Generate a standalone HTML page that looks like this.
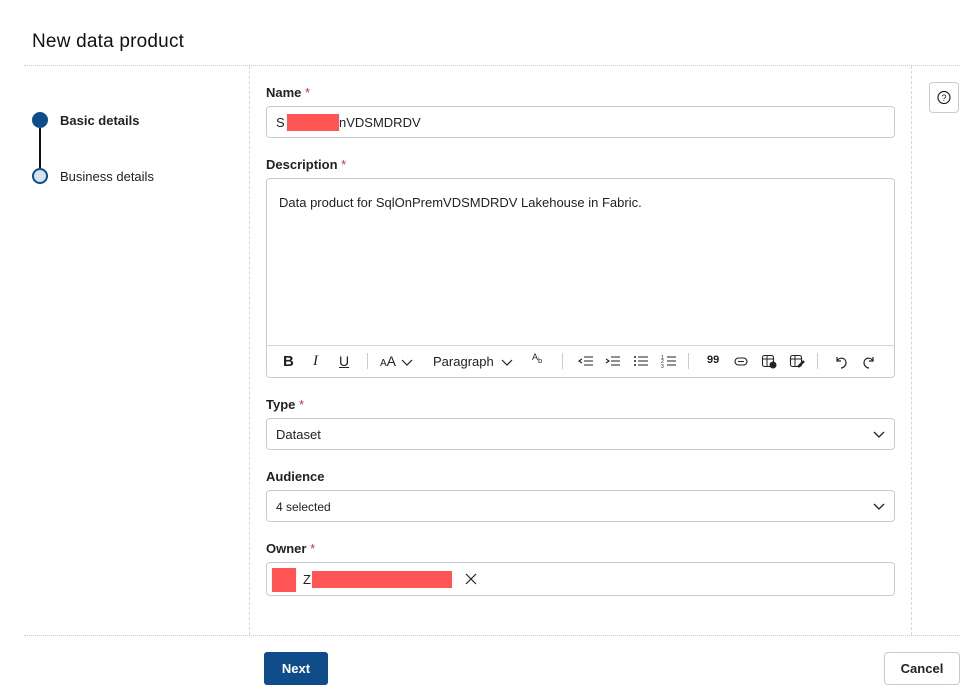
<!DOCTYPE html>
<html><head><style>
body{margin:0;width:960px;height:700px;background:#fff;font-family:"Liberation Sans",sans-serif;color:#222;position:relative;overflow:hidden;font-size:13px}
.a{position:absolute}
.lbl{position:absolute;left:266px;font-weight:bold;font-size:13px;color:#222}
.lbl span{color:#c4314b;font-weight:normal}
.box{position:absolute;left:266px;width:629px;border:1px solid #c8ccd1;border-radius:4px;background:#fff;box-sizing:border-box}
.red{position:absolute;background:#ff5555}
.chev{position:absolute;right:8px;top:9px}
.tb{position:absolute;font-size:13px;color:#222}
.ic{position:absolute;top:174px}
</style></head><body>
<div class="a" style="left:32px;top:31px;font-size:19px;color:#111;letter-spacing:0.2px">New data product</div>
<div class="a" style="left:24px;top:65px;width:936px;border-top:1px dotted #c5d0da"></div>
<div class="a" style="left:249px;top:66px;height:569px;border-left:1px dashed #cfd8e0"></div>
<div class="a" style="left:911px;top:66px;height:569px;border-left:1px dashed #cfd8e0"></div>
<div class="a" style="left:24px;top:635px;width:936px;border-top:1px dotted #c5d0da"></div>

<div class="a" style="left:32px;top:112px;width:16px;height:16px;border-radius:50%;background:#0f4c8a"></div>
<div class="a" style="left:39px;top:128px;width:2px;height:40px;background:#111"></div>
<div class="a" style="left:32px;top:168px;width:12px;height:12px;border-radius:50%;border:2px solid #0f4c8a;background:#d6e2ec"></div>
<div class="a" style="left:60px;top:113px;font-weight:bold">Basic details</div>
<div class="a" style="left:60px;top:169px">Business details</div>

<div class="a" style="left:929px;top:82px;width:30px;height:31px;box-sizing:border-box;border:1px solid #c8ccd1;border-radius:4px">
<svg width="28" height="29" viewBox="0 0 28 29"><circle cx="14" cy="14.5" r="6" fill="none" stroke="#222" stroke-width="1.2"/><text x="14" y="18" font-size="9" text-anchor="middle" font-family="Liberation Sans" fill="#222">?</text></svg></div>

<div class="lbl" style="top:85px">Name <span>*</span></div>
<div class="box" style="top:106px;height:32px"><div class="a" style="left:9px;top:8px">S</div><div class="red" style="left:20px;top:7px;width:52px;height:17px"></div><div class="a" style="left:72px;top:8px">nVDSMDRDV</div></div>

<div class="lbl" style="top:157px">Description <span>*</span></div>
<div class="box" style="top:178px;height:200px">
<div class="a" style="left:12px;top:16px">Data product for SqlOnPremVDSMDRDV Lakehouse in Fabric.</div>
<div class="a" style="left:0;right:0;top:166px;border-top:1px solid #d0d4d8"></div>
<div class="tb" style="left:16px;top:174px;font-weight:bold;font-size:15px">B</div>
<div class="tb" style="left:46px;top:174px;font-style:italic;font-size:15px;font-family:'Liberation Serif'">I</div>
<div class="tb" style="left:72px;top:174px;text-decoration:underline;font-size:14px">U</div>
<div class="a" style="left:100px;top:174px;height:16px;border-left:1px solid #ccc"></div>
<div class="tb" style="left:113px;top:174px;font-size:14px"><span style="font-size:10px">A</span>A</div>
<svg class="ic" style="left:134px;top:178px" width="12" height="10"><path d="M1 3l5 5 5-5" fill="none" stroke="#222" stroke-width="1.2"/></svg>
<div class="tb" style="left:166px;top:175px">Paragraph</div>
<svg class="ic" style="left:234px;top:178px" width="12" height="10"><path d="M1 3l5 5 5-5" fill="none" stroke="#222" stroke-width="1.2"/></svg>
<div class="tb" style="left:265px;top:173px;font-size:9px">A<sub>b</sub></div>
<div class="a" style="left:295px;top:174px;height:16px;border-left:1px solid #ccc"></div>
<svg class="ic" style="left:311px" width="16" height="16"><path d="M6 4h9M6 8h9M6 12h9M4 6L1 8l3 2" fill="none" stroke="#222" stroke-width="1.1"/></svg>
<svg class="ic" style="left:338px" width="16" height="16"><path d="M6 4h9M6 8h9M6 12h9M1 6l3 2-3 2" fill="none" stroke="#222" stroke-width="1.1"/></svg>
<svg class="ic" style="left:366px" width="16" height="16"><path d="M5 4h10M5 8h10M5 12h10" stroke="#222" stroke-width="1.1"/><circle cx="2" cy="4" r="1" fill="#222"/><circle cx="2" cy="8" r="1" fill="#222"/><circle cx="2" cy="12" r="1" fill="#222"/></svg>
<svg class="ic" style="left:394px" width="16" height="16"><path d="M6 4h9M6 8h9M6 12h9" stroke="#222" stroke-width="1.1"/><text x="0" y="6" font-size="5" fill="#222">1</text><text x="0" y="10" font-size="5" fill="#222">2</text><text x="0" y="15" font-size="5" fill="#222">3</text></svg>
<div class="a" style="left:421px;top:174px;height:16px;border-left:1px solid #ccc"></div>
<div class="tb" style="left:440px;top:175px;font-weight:bold;font-size:11px">99</div>
<svg class="ic" style="left:466px" width="16" height="16"><rect x="2" y="5" width="12" height="7" rx="3.5" fill="none" stroke="#222" stroke-width="1.1"/><path d="M5 8.5h6" stroke="#222"/></svg>
<svg class="ic" style="left:494px" width="16" height="16"><rect x="1.5" y="2.5" width="11" height="11" rx="2" fill="none" stroke="#222" stroke-width="1.1"/><path d="M1.5 6h11M6 2.5v11" stroke="#222"/><circle cx="12" cy="12" r="3.5" fill="#222"/></svg>
<svg class="ic" style="left:522px" width="16" height="16"><rect x="1.5" y="2.5" width="11" height="11" rx="2" fill="none" stroke="#222" stroke-width="1.1"/><path d="M1.5 6h11M6 2.5v11" stroke="#222"/><path d="M9 14l6-6" stroke="#222" stroke-width="2.5"/></svg>
<div class="a" style="left:550px;top:174px;height:16px;border-left:1px solid #ccc"></div>
<svg class="ic" style="left:566px" width="16" height="16"><path d="M4 4v4h4M4 8c2-4 9-4 9 2 0 3-3 5-5 5" fill="none" stroke="#222" stroke-width="1.2"/></svg>
<svg class="ic" style="left:594px" width="16" height="16"><path d="M12 4v4H8M12 8c-2-4-9-4-9 2 0 3 3 5 5 5" fill="none" stroke="#222" stroke-width="1.2"/></svg>
</div>

<div class="lbl" style="top:397px">Type <span>*</span></div>
<div class="box" style="top:418px;height:32px"><div class="a" style="left:9px;top:8px">Dataset</div><svg class="chev" width="14" height="14"><path d="M2 4l5 5 5-5" fill="none" stroke="#222" stroke-width="1.3"/></svg></div>

<div class="lbl" style="top:469px">Audience</div>
<div class="box" style="top:490px;height:32px"><div class="a" style="left:9px;top:9px;font-size:12px">4 selected</div><svg class="chev" width="14" height="14"><path d="M2 4l5 5 5-5" fill="none" stroke="#222" stroke-width="1.3"/></svg></div>

<div class="lbl" style="top:541px">Owner <span>*</span></div>
<div class="box" style="top:562px;height:34px"><div class="red" style="left:5px;top:5px;width:24px;height:24px"></div><div class="a" style="left:36px;top:9px">Z</div><div class="red" style="left:45px;top:8px;width:140px;height:17px"></div><svg class="a" style="left:198px;top:10px" width="12" height="12"><path d="M1 1l10 10M11 1L1 11" stroke="#222" stroke-width="1.2"/></svg></div>

<div class="a" style="left:264px;top:652px;width:64px;height:33px;background:#0f4c8a;border-radius:3px;color:#fff;font-weight:bold;text-align:center;line-height:33px;font-size:13px">Next</div>
<div class="a" style="left:884px;top:652px;width:76px;height:33px;box-sizing:border-box;border:1px solid #c8ccd1;border-radius:4px;text-align:center;line-height:31px;font-weight:bold">Cancel</div>
</body></html>
